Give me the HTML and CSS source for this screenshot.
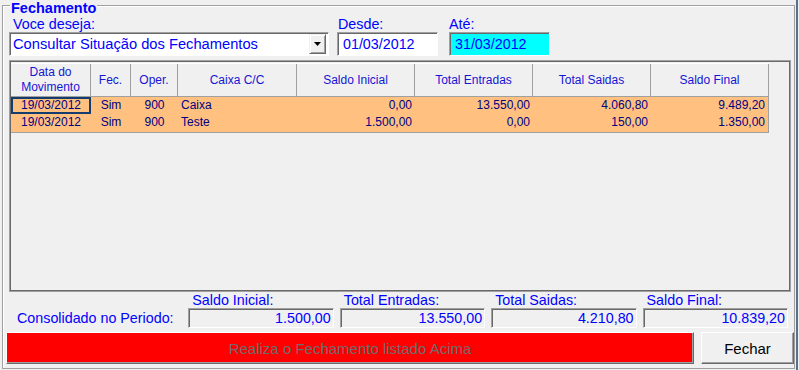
FILE: index.html
```html
<!DOCTYPE html>
<html lang="pt-BR">
  <head>
    <meta charset="UTF-8" />
    <meta name="viewport" content="width=device-width, initial-scale=1.0" />
    <title>Fechamento</title>
    <link rel="stylesheet" href="styles.css">
  </head>
  <body>
    <div class="window">
      <div class="group">
        <div class="legend">Fechamento</div>

        <div class="filters">
          <div class="field field-action">
            <label class="caption">Voce deseja:</label>
            <div class="combo">
              <span class="combo-text">Consultar Situação dos Fechamentos</span>
              <span class="combo-btn">
                <svg width="7" height="4" viewBox="0 0 7 4"><polygon points="0,0 7,0 3.5,4" fill="#000" /></svg>
              </span>
            </div>
          </div>
          <div class="field field-from">
            <label class="caption">Desde:</label>
            <div class="textbox">01/03/2012</div>
          </div>
          <div class="field field-to">
            <label class="caption">Até:</label>
            <div class="textbox textbox-active">31/03/2012</div>
          </div>
        </div>

        <div class="grid">
          <div class="grid-head">
            <div class="cell">Data do<br />Movimento</div>
            <div class="cell">Fec.</div>
            <div class="cell">Oper.</div>
            <div class="cell">Caixa C/C</div>
            <div class="cell">Saldo Inicial</div>
            <div class="cell">Total Entradas</div>
            <div class="cell">Total Saidas</div>
            <div class="cell">Saldo Final</div>
          </div>
          <div class="grid-row">
            <div class="cell center current">19/03/2012</div>
            <div class="cell center">Sim</div>
            <div class="cell center">900</div>
            <div class="cell">Caixa</div>
            <div class="cell right">0,00</div>
            <div class="cell right">13.550,00</div>
            <div class="cell right">4.060,80</div>
            <div class="cell right">9.489,20</div>
          </div>
          <div class="grid-row">
            <div class="cell center">19/03/2012</div>
            <div class="cell center">Sim</div>
            <div class="cell center">900</div>
            <div class="cell">Teste</div>
            <div class="cell right">1.500,00</div>
            <div class="cell right">0,00</div>
            <div class="cell right">150,00</div>
            <div class="cell right">1.350,00</div>
          </div>
        </div>

        <div class="summary">
          <div class="summary-label">Consolidado no Periodo:</div>
          <div class="total">
            <div class="caption">Saldo Inicial:</div>
            <div class="total-box">1.500,00</div>
          </div>
          <div class="total">
            <div class="caption">Total Entradas:</div>
            <div class="total-box">13.550,00</div>
          </div>
          <div class="total">
            <div class="caption">Total Saidas:</div>
            <div class="total-box">4.210,80</div>
          </div>
          <div class="total">
            <div class="caption">Saldo Final:</div>
            <div class="total-box">10.839,20</div>
          </div>
        </div>

        <div class="actions">
          <button class="btn btn-run" disabled>Realiza o Fechamento listado Acima</button>
          <button class="btn btn-close">Fechar</button>
        </div>
      </div>
    </div>
  </body>
</html>
```

FILE: styles.css
```css
body {
  margin: 0;
  padding: 0;
  background-color: #f0f0f0;
  font-family: "Liberation Sans", Arial, sans-serif;
  font-size: 14.3px;
  overflow: hidden;
}

.window {
  box-sizing: border-box;
  width: 798px;
  height: 370px;
  border-right: 2px solid #5a7189;
  overflow: hidden;
}

.group {
  box-sizing: border-box;
  width: 793px;
  height: 364px;
  margin: 5px 0 0 2px;
  border: 1px solid #a0a0a0;
  box-shadow: inset 1px 1px 0 #fff;
}

.legend {
  display: table;
  margin: -6px 0 0 7px;
  padding: 0 1px;
  background-color: #f0f0f0;
  color: #0000ff;
  font-weight: bold;
  font-size: 14.5px;
  line-height: 16px;
}

.caption {
  display: block;
  color: #0000ff;
  line-height: 16px;
  white-space: nowrap;
}

.filters {
  display: flex;
  margin-left: 6px;
}

.field-action {
  width: 320px;
}

.field-action .caption {
  padding-left: 4px;
}

.field-from {
  width: 101px;
  margin-left: 8px;
}

.field-from .caption {
  padding-left: 1px;
}

.field-to {
  width: 101px;
  margin-left: 11px;
}

.combo,
.textbox,
.total-box {
  box-sizing: border-box;
  border: 1px solid;
  border-color: #a0a0a0 #fff #fff #a0a0a0;
  box-shadow: inset 1px 1px 0 #696969;
  color: #0000ff;
}

.combo {
  display: flex;
  align-items: center;
  height: 24px;
  background-color: #fff;
  padding: 1px 1px 1px 3px;
}

.combo-text {
  flex: 1;
  font-size: 14.7px;
  white-space: nowrap;
}

.combo-btn {
  box-sizing: border-box;
  display: flex;
  align-items: center;
  justify-content: center;
  width: 17px;
  height: 20px;
  margin-right: 1px;
  background-color: #f0f0f0;
  border: 1px solid;
  border-color: #f0f0f0 #696969 #696969 #f0f0f0;
  box-shadow: inset 1px 1px 0 #fff, inset -1px -1px 0 #a0a0a0;
}

.textbox {
  height: 24px;
  line-height: 22px;
  padding-left: 5px;
  background-color: #fff;
}

.textbox-active {
  background-color: #00ffff;
}

.grid {
  box-sizing: border-box;
  width: 782px;
  height: 232px;
  margin: 4px 0 0 6px;
  padding: 2px 0 0 1px;
  border: 1px solid #a0a0a0;
  box-shadow: inset 0 0 0 1px #696969;
  font-size: 12px;
}

.grid-head,
.grid-row {
  display: grid;
  grid-template-columns: 80px 40px 47px 119px 118px 118px 118px 118px;
  width: 758px;
}

.grid-head {
  height: 34px;
  border-top: 1px solid #fff;
  box-sizing: border-box;
  color: #1515d5;
}

.grid-head .cell {
  display: flex;
  align-items: center;
  justify-content: center;
  text-align: center;
  line-height: 15px;
  border-right: 1px solid #a0a0a0;
  border-bottom: 1px solid #a0a0a0;
}

.grid-row {
  height: 17px;
  background-color: #ffc080;
  color: #000080;
  line-height: 17px;
}

.grid-row:last-child {
  height: 18px;
  border-bottom: 1px solid #a0a0a0;
}

.grid-row .cell {
  padding: 0 3px;
  white-space: nowrap;
}

.grid-row .cell:last-child {
  border-right: 1px solid #a0a0a0;
}

.cell.center {
  text-align: center;
}

.cell.right {
  text-align: right;
}

.cell.current {
  box-shadow: inset 0 0 0 2px #143c6e;
}

.summary {
  display: flex;
  align-items: flex-end;
  margin-top: 0;
  padding-left: 14px;
}

.summary-label {
  width: 172px;
  color: #0000ff;
  line-height: 20px;
}

.total {
  width: 146px;
  margin-right: 6px;
}

.total .caption {
  padding-left: 4px;
}

.total-box {
  height: 20px;
  line-height: 19px;
  padding-right: 2px;
  text-align: right;
}

.actions {
  display: flex;
  margin: 4px 0 0 3px;
}

.btn {
  box-sizing: border-box;
  height: 32px;
  border: 1px solid;
  border-color: #fff #696969 #696969 #fff;
  box-shadow: inset -1px -1px 0 #a0a0a0;
  font-family: "Liberation Sans", Arial, sans-serif;
  font-size: 15px;
  padding: 0;
}

.btn-run {
  width: 688px;
  background-color: #ff0000;
  color: #6d6d6d;
}

.btn-close {
  width: 93px;
  margin-left: 7px;
  background-color: #f0f0f0;
  color: #000;
}
```
